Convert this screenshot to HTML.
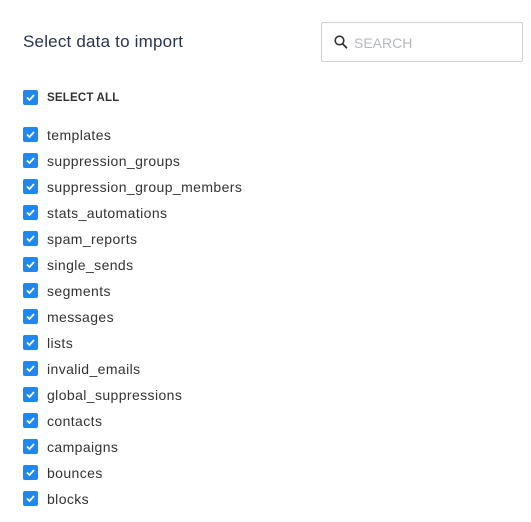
<!DOCTYPE html><html><head><style>
body{margin:0;width:531px;height:522px;background:#fff;font-family:"Liberation Sans",sans-serif;position:relative;overflow:hidden}
.t{position:absolute;left:23px;top:32px;font-size:17px;color:#2a3450;letter-spacing:0.2px}
.s{position:absolute;left:321px;top:22px;width:202px;height:40px;border:1px solid #cdd1d6;border-radius:2px;box-sizing:border-box}
.s span{position:absolute;left:32px;top:12px;font-size:14px;color:#b5b9be}
.s svg{position:absolute;left:12px;top:12px}
.r{position:absolute;left:23px;height:16px;font-size:14px;color:#333;line-height:16px}
.cb{position:absolute;left:0;top:0;width:15px;height:15px;background:#1e88f0;border-radius:2px}
.cb svg{position:absolute;left:2px;top:2px}
.r b{position:absolute;left:24px;top:0;white-space:nowrap;font-weight:normal;letter-spacing:0.4px}
.r.a b{font-weight:bold;font-size:11.5px;letter-spacing:0.2px}
</style></head><body>
<div class="t">Select data to import</div>
<div class="s"><svg width="14" height="15" viewBox="0 0 14 15"><circle cx="5.5" cy="5.5" r="4.3" fill="none" stroke="#333" stroke-width="1.6"/><path d="M8.7 8.9L13 13.3" stroke="#333" stroke-width="1.8"/></svg><span>SEARCH</span></div>
<div class="r a" style="top:90px"><i class="cb"><svg width="11" height="11"><path d="M2 5.5L4.5 8L9 3" fill="none" stroke="#fff" stroke-width="1.8"/></svg></i><b>SELECT ALL</b></div>
<div id="l"></div>
<script>
var n=["templates","suppression_groups","suppression_group_members","stats_automations","spam_reports","single_sends","segments","messages","lists","invalid_emails","global_suppressions","contacts","campaigns","bounces","blocks"],h="";
n.forEach(function(x,i){h+='<div class="r" style="top:'+(127+26*i)+'px"><i class="cb"><svg width="11" height="11"><path d="M2 5.5L4.5 8L9 3" fill="none" stroke="#fff" stroke-width="1.8"/></svg></i><b>'+x+'</b></div>'});
document.getElementById("l").innerHTML=h;
</script>
</body></html>
